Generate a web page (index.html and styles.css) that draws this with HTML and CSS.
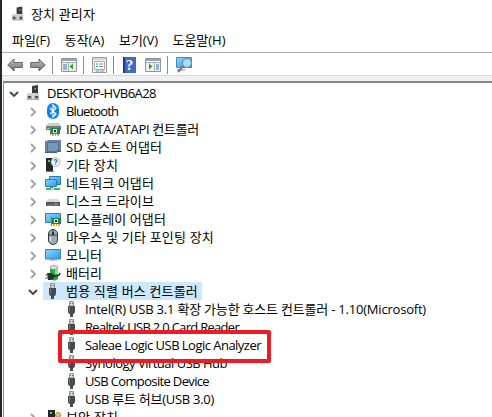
FILE: index.html
```
<!DOCTYPE html>
<html lang="ko">
<head>
<meta charset="utf-8">
<title>장치 관리자</title>
<link rel="stylesheet" href="styles.css">
</head>
<body>
<svg class="defs" aria-hidden="true">
  <defs>
    <linearGradient id="blue" x1="0" y1="0" x2="1" y2="1"><stop offset="0" stop-color="#8cd4fb"/><stop offset="1" stop-color="#2a9ce8"/></linearGradient>
    <linearGradient id="gray" x1="0" y1="0" x2="0" y2="1"><stop offset="0" stop-color="#c4c4c4"/><stop offset="1" stop-color="#6d6d6d"/></linearGradient>
    <symbol id="computer" viewBox="0 0 16 16"><path d="M6 1l6-1v10H6z" fill="#363b3e"/><path d="M8.500 3h1.500v1.500H8.500z" fill="#3be04b"/><path d="M2 8h9l2 2H1z" fill="#d6d6d6"/><path d="M1 9.500h12V15H1z" fill="#aaa"/><path d="M1 9.500h12v1.200H1zM6 11h2v3H6z" fill="#ddd"/><path d="M2.500 11h2v2h-2zM9.500 11h2v2h-2z" fill="#303030"/></symbol>
    <symbol id="bluetooth" viewBox="0 0 16 16"><rect x="2" width="12" height="16" rx="6" fill="#0b82f5"/><path d="M5 5l6 6-3 3V2l3 3-6 6" fill="none" stroke="#fff" stroke-width="1.200"/></symbol>
    <symbol id="ide" viewBox="0 0 16 16"><path d="M3 2h11l2 3H1z" fill="#ccc"/><path d="M1 5h15v4H1z" fill="#777"/><path d="M2 7h4v1H2z" fill="#5e6"/><path d="M6 7h9v6H6z" fill="#18855a"/><path d="M8 8h4v4H8z" fill="#d3eadd"/><path d="M9 9h2v2H9z" fill="#17332a"/><path d="M7 13h2v2H7zm3 0h1v2h-1zm2 0h2v2h-2z" fill="#eda725"/><path d="M5.500 7v7" stroke="#777"/></symbol>
    <symbol id="sd" viewBox="0 0 16 16"><path d="M0 2h2l1-1h13v12h-4l-1 1H0z" fill="#6683a5"/><path d="M2.500 3.500h11v8H11l-1 1H2.500z" fill="#7897b9" stroke="#4f6e91"/><path d="M0 13.500h12l1-1h3" fill="none" stroke="#435d7b"/></symbol>
    <symbol id="other" viewBox="0 0 16 16"><path d="M1 1h7v13H1z" fill="#24282a"/><path d="M3 3h2v2H3z" fill="#3fe34d"/><path d="M1 14h8v1H1z" fill="#777"/><circle cx="10.500" cy="5" r="4.500" fill="#eef6fb" stroke="#999" stroke-width=".7"/><path d="M9 3.500q1.500-1.500 2.700-.3t-1 2v1M10.600 7v1" fill="none" stroke="#2378bc" stroke-width="1.200"/></symbol>
    <symbol id="network" viewBox="0 0 16 16"><path d="M4.500 1.500h11v8h-11z" fill="url(#blue)" stroke="#287cae"/><path d="M.5 4.500h11v7H.5z" fill="url(#blue)" stroke="#287cae"/><path d="M5 12h3v1H5z" fill="#888"/><path d="M1 14h14" stroke="#38bd50" stroke-width="2"/><path d="M6 13h3v2H6z" fill="#a4e5a9"/></symbol>
    <symbol id="disk" viewBox="0 0 16 16"><path d="M3 6h10l2 3H1z" fill="#d8d8d8"/><path d="M1 9h14v4H1z" fill="#555"/><path d="M2 12h12" stroke="#888"/><path d="M10 10h2v1h-2z" fill="#50ee53"/></symbol>
    <symbol id="display" viewBox="0 0 16 16"><path d="M.5 2.500h15v9H.5z" fill="url(#blue)" stroke="#3981aa"/><path d="M7 7h9v6H7z" fill="#18855a"/><path d="M9 8h4v4H9z" fill="#cfe5da"/><path d="M10 9h2v2h-2z" fill="#222"/><path d="M8 13h2v2H8zm3 0h1v2h-1zm2 0h2v2h-2z" fill="#eda725"/><path d="M6.500 6v9" stroke="#777"/></symbol>
    <symbol id="mouse" viewBox="0 0 16 16"><rect x="3.500" y=".5" width="9" height="15" rx="4.500" fill="#9da9b3" stroke="#30363a"/><path d="M4 6h8M8 1v5" stroke="#4d555b"/><path d="M5.500 8v4" stroke="#d9e0e5" stroke-width="1.500"/><rect x="7" y="2.500" width="2" height="4" rx="1" fill="#252c32"/></symbol>
    <symbol id="monitor" viewBox="0 0 16 16"><path d="M.5 2.500h15v9.500H.5z" fill="url(#blue)" stroke="#3981aa"/><path d="M6 12h4v1H6z" fill="#999"/><path d="M4 13.500h8" stroke="#ccc"/></symbol>
    <symbol id="battery" viewBox="0 0 16 16"><path d="M5 3q4 2 8 0v11q-4 3-8 0z" fill="#20af36"/><path d="M10 3l3-1v7h-3z" fill="#8be295"/><ellipse cx="9" cy="2.500" rx="4" ry="2" fill="#ddd" stroke="#777" stroke-width=".6"/><path d="M0 10h3M0 13h3" stroke="#777"/><path d="M2 8h4q3 1 4 3-1 3-4 4H3z" fill="#2c3032"/><path d="M8 11q6 1 7-3" fill="none" stroke="#292d2f" stroke-width="1.500"/></symbol>
    <symbol id="usb" viewBox="0 0 16 16"><path d="M5.500.5h4V5h-4z" fill="#ddd" stroke="#929292"/><path d="M6 2h1v1H6zM8 2h1v1H8z" fill="#666"/><path d="M4 5h7v5q0 3-2 3v3H6v-3q-2 0-2-3z" fill="#484b4d"/><path d="M5.500 5.500v5" stroke="#777"/></symbol>
    <symbol id="security" viewBox="0 0 16 16"><path d="M3 1h7v14H3z" fill="#24282a"/><path d="M5 3h2v2H5z" fill="#3fe34d"/><circle cx="13" cy="6" r="2.500" fill="#e5c66c" stroke="#a98a38"/></symbol>
    <symbol id="closed" viewBox="0 0 10 10"><path d="M3 1l4 4-4 4" fill="none" stroke="#a3a3a3" stroke-width="1.900"/></symbol>
    <symbol id="open" viewBox="0 0 10 10"><path d="M1 3l4 4 4-4" fill="none" stroke="#464646" stroke-width="1.900"/></symbol>
    <symbol id="arrow" viewBox="0 0 16 14"><path d="M.7 7L7 1v3.500h8.300v5H7V13z" fill="url(#gray)" stroke="#666" stroke-linejoin="round"/></symbol>
    <symbol id="panel" viewBox="0 0 16 14"><path d="M.5.5h15v13H.5z" fill="#eee" stroke="#8d979f"/><path d="M1 1h14v2H1z" fill="#97a4b0"/><path d="M1 3.500h14" stroke="#fff"/><path d="M1 4.500h14" stroke="#a6adb3"/></symbol>
  </defs>
</svg>
<div class="desktop">
  <main class="window">
    <header class="title"><svg class="icon"><use href="#computer"/></svg><span data-width="64">장치 관리자</span></header>
    <nav class="menu"><span data-width="38">파일(F)</span><span data-width="40">동작(A)</span><span data-width="39">보기(V)</span><span data-width="53">도움말(H)</span></nav>
    <div class="toolbar">
      <svg class="arrow"><use href="#arrow"/></svg><svg class="arrow forward"><use href="#arrow"/></svg><i></i>
      <svg class="tool" viewBox="0 0 16 14"><use href="#panel"/><path d="M7.500 5v8" stroke="#a6adb3"/><path d="M2 7h4M2 9h4M2 11h4" stroke="#3979ba"/><path d="M12 5.500v6L8.500 8.500z" fill="#28a526"/></svg><i></i>
      <svg class="tool properties" viewBox="0 0 15 16"><path d="M.5.500h14v15H.5z" fill="#eee" stroke="#949a9e"/><path d="M1 2h13" stroke="#bdc2c6"/><path d="M2.500 4.500h10v8h-10z" fill="#fff" stroke="#aaa"/><path d="M4 7h2M4 9.500h2" stroke="#398bc8"/><path d="M7 7h4M7 9.500h4" stroke="#888"/><path d="M4 14h3" stroke="#21b7d1"/><path d="M8 14h4" stroke="#999"/></svg><i></i>
      <span class="help">?</span>
      <svg class="tool" viewBox="0 0 16 14"><use href="#panel"/><path d="M9.500 5v8" stroke="#a6adb3"/><path d="M11 7h3M11 9h3M11 11h3" stroke="#3979ba"/><path d="M4 5.500v6L7.500 8.500z" fill="#28a526"/></svg><i></i>
      <svg class="scan" viewBox="0 0 17 16"><path d="M.5.500h15v10H.5z" fill="url(#blue)" stroke="#438cb5"/><path d="M1 13h8" stroke="#888"/><path d="M8 8l-6 7" stroke="#777" stroke-width="2"/><circle cx="11" cy="6" r="4.500" fill="#a6def6" stroke="#64879b"/></svg>
    </div>
    <section class="tree" id="tree"></section>
  </main>
</div>
<script src="script.js"></script>
</body>
</html>
```
FILE: styles.css
```
*, *::after { box-sizing: border-box; }
body { margin: 0; background: #fff; color: #000; font: 13px/18px "Open Sans", "Noto Sans CJK KR", sans-serif; }
.defs { position: absolute; width: 0; height: 0; }
.desktop { width: 492px; height: 417px; padding-left: 2px; overflow: hidden; background: #24272c; }
.window { height: 417px; background: #fff; overflow: hidden; }
svg { display: block; flex: none; }
span { white-space: nowrap; }
.icon { width: 16px; height: 16px; }
.title { display: flex; align-items: center; height: 28px; padding-left: 9px; gap: 5px; }
.title .icon { width: 15px; }
.menu { display: flex; align-items: center; gap: 14.5px; height: 24px; padding-left: 10px; }
.toolbar { display: flex; align-items: center; height: 24px; border-top: 1px solid #adadad; border-bottom: 1px solid #d9d9d9; padding: 2px 0 0 5px; }
.toolbar i { width: 1px; height: 18px; margin: 0 8px 0 6px; background: #8b8b8b; }
.arrow { width: 16px; height: 14px; }
.forward { transform: scaleX(-1); margin-left: 7px; }
.tool { width: 16px; height: 14px; }
.properties { width: 15px; height: 16px; }
.help { width: 13px; height: 16px; margin-left: 1px; margin-right: 9px; background: linear-gradient(90deg, #263879 0 2px, #4268cb 2px); color: #fff; font: bold 15px/16px "Liberation Serif", serif; text-align: center; }
.scan { width: 17px; height: 16px; }
.tree { height: 341px; border-top: 5px solid #f0f0f0; background: #fff; }
.rows { margin-left: 1px; border: solid #828790; border-width: 2px 0 0 1px; padding-top: 1px; height: 336px; }
.row { display: flex; align-items: center; height: 18px; padding-left: 24px; }
.row.root { padding-left: 5px; }
.row.leaf { padding-left: 58px; }
.chevron { width: 10px; height: 10px; margin: 1px 5px 0 0; }
.picture { display: flex; align-items: center; height: 18px; padding-left: 2px; }
.label { height: 18px; padding: 0 4px 0 5px; }
.selected { background: #cce8ff; }
.outlined { position: relative; }
.outlined::after { content: ""; position: absolute; left: 54px; top: -6px; width: 213px; height: 33px; border: 4px solid #ed1c24; border-radius: 2px; }
```
FILE: script.js
```
const devices = [
  ["root", "computer", "DESKTOP-HVB6A28", 109, "open"],
  ["", "bluetooth", "Bluetooth", 52, "closed"],
  ["", "ide", "IDE ATA/ATAPI 컨트롤러", 133, "closed"],
  ["", "sd", "SD 호스트 어댑터", 96, "closed"],
  ["", "other", "기타 장치", 52, "closed"],
  ["", "network", "네트워크 어댑터", 88, "closed"],
  ["", "disk", "디스크 드라이브", 88, "closed"],
  ["", "display", "디스플레이 어댑터", 100, "closed"],
  ["", "mouse", "마우스 및 기타 포인팅 장치", 148, "closed"],
  ["", "monitor", "모니터", 36, "closed"],
  ["", "battery", "배터리", 36, "closed"],
  ["", "usb", "범용 직렬 버스 컨트롤러", 132, "open", "selected"],
  ["leaf", "usb", "Intel(R) USB 3.1 확장 가능한 호스트 컨트롤러 - 1.10(Microsoft)", 341],
  ["leaf", "usb", "Realtek USB 2.0 Card Reader", 154],
  ["leaf outlined", "usb", "Saleae Logic USB Logic Analyzer", 176],
  ["leaf", "usb", "Synology Virtual USB Hub", 142],
  ["leaf", "usb", "USB Composite Device", 124],
  ["leaf", "usb", "USB 루트 허브(USB 3.0)", 129],
  ["", "security", "보안 장치", 52, "closed"]
];
const rows = devices.map(([level, icon, name, width, chevron, state = ""]) => `
  <div class="row ${level}">
    ${chevron ? `<svg class="chevron"><use href="#${chevron}"/></svg>` : ""}
    <div class="picture ${state}"><svg class="icon"><use href="#${icon}"/></svg></div>
    <div class="label ${state}"><span data-width="${width}">${name}</span></div>
  </div>`).join("");
document.getElementById("tree").innerHTML = `<div class="rows">${rows}</div>`;

// Keep label widths consistent across fallback fonts.
for (const label of document.querySelectorAll("[data-width]")) {
  const natural = label.getBoundingClientRect().width;
  label.style.letterSpacing = `${(Number(label.dataset.width) - natural) / label.textContent.length}px`;
}
```
